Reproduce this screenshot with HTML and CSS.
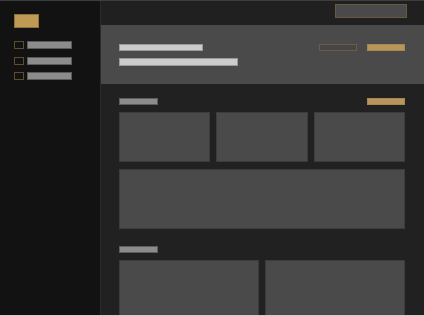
FILE: index.html
```html
<!DOCTYPE html>
<html>
<head>
<meta charset="utf-8">
<link rel="stylesheet" href="styles.css">
</head>
<body>
<div class="app">
  <aside class="sidebar">
    <div class="logo"></div>
    <nav class="nav">
      <div class="nav-item"><span class="check"></span><span class="nav-bar"></span></div>
      <div class="nav-item"><span class="check"></span><span class="nav-bar"></span></div>
      <div class="nav-item"><span class="check"></span><span class="nav-bar"></span></div>
    </nav>
  </aside>
  <main class="main">
    <header class="topbar"><div class="top-btn"></div></header>
    <section class="hero">
      <div class="hero-text">
        <div class="bar-light title"></div>
        <div class="bar-light subtitle"></div>
      </div>
      <div class="hero-actions">
        <div class="btn-outline"></div>
        <div class="btn-gold"></div>
      </div>
    </section>
    <div class="content">
      <section class="section">
        <div class="section-head">
          <div class="bar-gray"></div>
          <div class="btn-gold"></div>
        </div>
        <div class="grid3">
          <div class="card"></div>
          <div class="card"></div>
          <div class="card"></div>
          <div class="card wide"></div>
        </div>
      </section>
      <section class="section second">
        <div class="section-head">
          <div class="bar-gray"></div>
        </div>
        <div class="grid2">
          <div class="card tall"></div>
          <div class="card tall"></div>
        </div>
      </section>
    </div>
  </main>
</div>
</body>
</html>
```
FILE: styles.css
```css
html, body {
  margin: 0;
  padding: 0;
  background: #cfcfcf;
  font-family: "Liberation Sans", sans-serif;
}
.app {
  box-sizing: border-box;
  width: 424px;
  height: 316px;
  display: grid;
  grid-template-columns: 100px 1fr;
  border-top: 1px solid #3d3d3d;
  border-bottom: 1px solid #cfcfcf;
  overflow: hidden;
  background: #212121;
}
.sidebar {
  background: #121212;
  padding: 13px 14px;
}
.logo {
  box-sizing: border-box;
  width: 25px;
  height: 14px;
  background: #bf9a55;
  border: 1px solid #8e7340;
}
.nav {
  margin-top: 13px;
  display: flex;
  flex-direction: column;
  gap: 7.5px;
}
.nav-item {
  display: flex;
  align-items: center;
  gap: 3px;
  height: 8px;
}
.check {
  box-sizing: border-box;
  width: 10px;
  height: 8px;
  border: 1px solid #5e4c2b;
}
.nav-bar {
  box-sizing: border-box;
  width: 45px;
  height: 8px;
  background: #8c8c8c;
  border: 1px solid #5a5a5a;
}
.main {
  background: #212121;
  border-left: 1px solid #2b2b2b;
  display: flex;
  flex-direction: column;
  min-width: 0;
}
.topbar {
  height: 24px;
  box-sizing: border-box;
  display: flex;
  justify-content: flex-end;
  padding: 3px 17px 0 0;
  background: #202020;
}
.top-btn {
  box-sizing: border-box;
  width: 72px;
  height: 14px;
  background: #4a4a4a;
  border: 1px solid #685a3d;
}
.hero {
  height: 59px;
  box-sizing: border-box;
  background: #4a4a4a;
  padding: 19px 19px 0 18px;
  display: flex;
  justify-content: space-between;
  align-items: flex-start;
}
.hero-text {
  display: flex;
  flex-direction: column;
  gap: 7px;
}
.bar-light {
  box-sizing: border-box;
  height: 7px;
  background: #cccccc;
  border: 1px solid #9a9a9a;
}
.title { width: 84px; }
.subtitle { width: 119px; height: 8px; }
.hero-actions {
  display: flex;
  gap: 10px;
}
.btn-outline {
  box-sizing: border-box;
  width: 38px;
  height: 7px;
  border: 1px solid #6e5e3e;
  background: #464646;
}
.btn-gold {
  box-sizing: border-box;
  width: 38px;
  height: 7px;
  background: #b8955a;
  border: 1px solid #a98750;
}
.content {
  padding: 14px 19px 0 18px;
}
.section-head {
  display: flex;
  justify-content: space-between;
  align-items: flex-start;
  margin-bottom: 7px;
}
.bar-gray {
  box-sizing: border-box;
  width: 39px;
  height: 7px;
  background: #8c8c8c;
  border: 1px solid #5e5e5e;
}
.grid3 {
  display: grid;
  grid-template-columns: repeat(3, 1fr);
  column-gap: 6px;
  row-gap: 7px;
}
.grid2 {
  display: grid;
  grid-template-columns: repeat(2, 1fr);
  column-gap: 6px;
}
.card {
  box-sizing: border-box;
  height: 50px;
  background: #4a4a4a;
  border: 1px solid #3c3c3c;
}
.card.wide {
  grid-column: span 3;
  height: 60px;
}
.card.tall {
  height: 70px;
}
.section.second {
  margin-top: 17px;
}
```
